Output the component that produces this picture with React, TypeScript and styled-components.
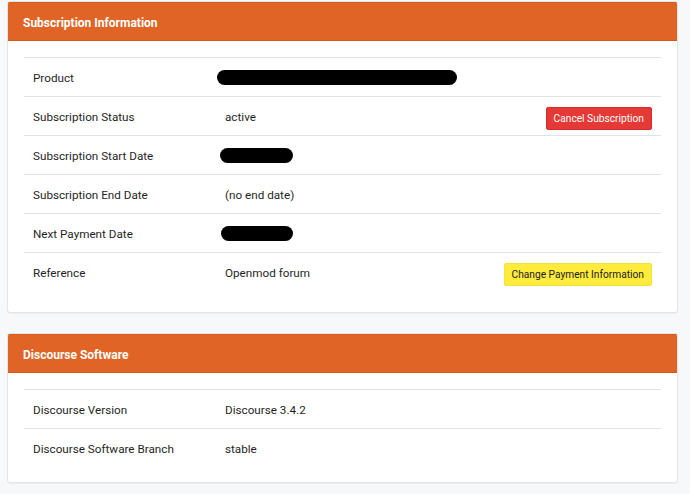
import React from "react";
import styled, { createGlobalStyle } from "styled-components";

const Global = createGlobalStyle`
  html, body { margin: 0; padding: 0; background: #f7f8fa; }
  body { font-family: Roboto, "Liberation Sans", sans-serif; color: #1f1f1f; }
`;

const Page = styled.div`
  display: flex;
  flex-direction: column;
  gap: 20px;
  padding: 1px 12px 10px 7px;
`;

const Card = styled.section`
  background: #fff;
  border: 1px solid #e3e5e8;
  border-radius: 3px;
  box-shadow: 0 1px 1px rgba(0, 0, 0, 0.04);
  overflow: hidden;
`;

const Header = styled.h2`
  margin: 0;
  height: 39px;
  box-sizing: border-box;
  display: flex;
  align-items: center;
  padding: 2px 15px 0;
  background: #e06426;
  border-top: 1px solid #d85c1f;
  border-bottom: 1px solid #d4561a;
  color: #fff;
  font-size: 12px;
  font-weight: 700;
`;

const Body = styled.div<{ $padBottom: number }>`
  padding: 16px 16px ${(p) => p.$padBottom}px;
`;

const Row = styled.div`
  display: grid;
  grid-template-columns: 192px 1fr auto;
  align-items: center;
  min-height: 38px;
  border-top: 1px solid #dfe2e6;
  padding: 0 9px;
  font-size: 11.7px;
`;

const Label = styled.div`
  padding-top: 1px;
`;
const Value = styled.div`
  padding-top: 1px;
`;

const Redacted = styled.span<{ $w: number; $shift: number }>`
  display: inline-block;
  width: ${(p) => p.$w}px;
  height: 15px;
  margin-left: ${(p) => p.$shift}px;
  border-radius: 8px;
  background: #000;
  vertical-align: middle;
`;

const Button = styled.button<{ $variant: "danger" | "warning" }>`
  margin: 10px 0 5px;
  height: 23px;
  padding: 0 7px;
  border-radius: 2px;
  border: 1px solid ${(p) => (p.$variant === "danger" ? "#d32f2f" : "#f5e23a")};
  background: ${(p) => (p.$variant === "danger" ? "#e53935" : "#ffeb3b")};
  color: ${(p) => (p.$variant === "danger" ? "#fff" : "#222")};
  font-family: Roboto, "Liberation Sans", sans-serif;
  font-size: 10.2px;
`;

export default function App() {
  return (
    <>
      <Global />
      <Page>
        <Card>
          <Header>Subscription Information</Header>
          <Body $padBottom={21}>
            <Row>
              <Label>Product</Label>
              <Value>
                <Redacted $w={240} $shift={-8} />
              </Value>
            </Row>
            <Row>
              <Label>Subscription Status</Label>
              <Value>active</Value>
              <Button $variant="danger">Cancel Subscription</Button>
            </Row>
            <Row>
              <Label>Subscription Start Date</Label>
              <Value>
                <Redacted $w={73} $shift={-5} />
              </Value>
            </Row>
            <Row>
              <Label>Subscription End Date</Label>
              <Value>(no end date)</Value>
            </Row>
            <Row>
              <Label>Next Payment Date</Label>
              <Value>
                <Redacted $w={72} $shift={-4} />
              </Value>
            </Row>
            <Row>
              <Label>Reference</Label>
              <Value>Openmod forum</Value>
              <Button $variant="warning">Change Payment Information</Button>
            </Row>
          </Body>
        </Card>
        <Card>
          <Header>Discourse Software</Header>
          <Body $padBottom={15}>
            <Row>
              <Label>Discourse Version</Label>
              <Value>Discourse 3.4.2</Value>
            </Row>
            <Row>
              <Label>Discourse Software Branch</Label>
              <Value>stable</Value>
            </Row>
          </Body>
        </Card>
      </Page>
    </>
  );
}
